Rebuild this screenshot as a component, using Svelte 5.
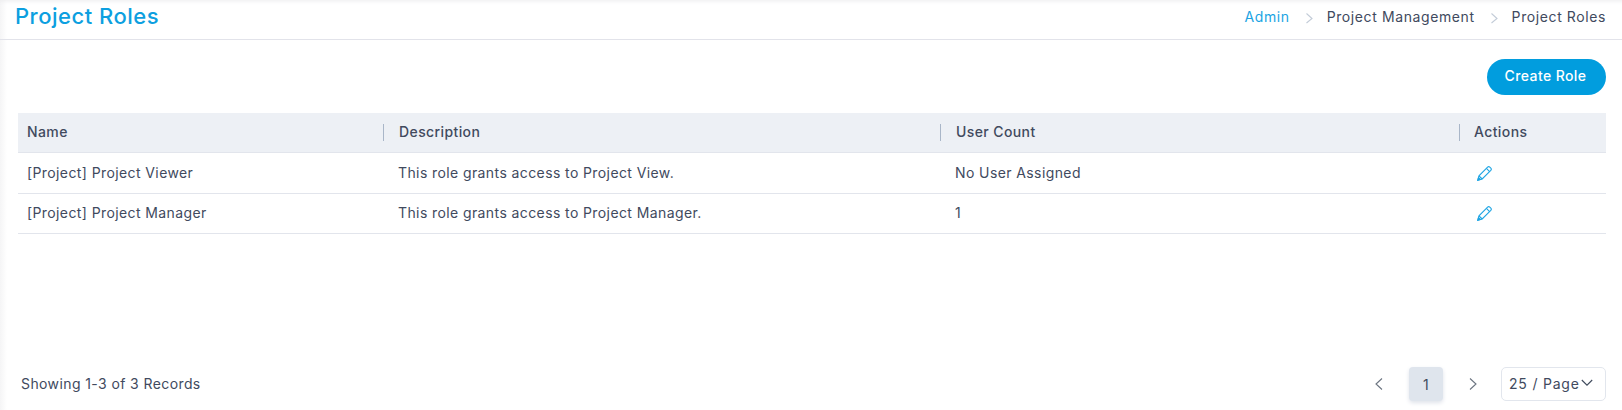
<script>
  const crumbs = ["Project Management", "Project Roles"];
  const roles = [
    { name: "[Project] Project Viewer", description: "This role grants access to Project View.", users: "No User Assigned" },
    { name: "[Project] Project Manager", description: "This role grants access to Project Manager.", users: "1" }
  ];
  const columns = ["Name", "Description", "User Count", "Actions"];
</script>

<div class="page">
  <header class="topbar">
    <h1>Project Roles</h1>
    <nav class="crumbs">
      <span class="link">Admin</span>
      {#each crumbs as crumb}
        <svg class="sep" width="9" height="12" viewBox="0 0 9 12"><path d="M1.5 1.5 7 6.5 1.5 11" fill="none" stroke="#c3ccd8" stroke-width="1.1" /></svg>
        <span>{crumb}</span>
      {/each}
    </nav>
  </header>

  <main class="content">
    <div class="toolbar">
      <button class="create">Create Role</button>
    </div>

    <div class="table">
      <div class="row head">
        {#each columns as col}
          <div class="cell">{col}</div>
        {/each}
      </div>
      {#each roles as role}
        <div class="row body">
          <div class="cell">{role.name}</div>
          <div class="cell">{role.description}</div>
          <div class="cell">{role.users}</div>
          <div class="cell">
            <svg class="edit" width="15" height="15" viewBox="0 0 15 15" fill="none" stroke="#1fa5e3" stroke-width="1.1">
              <path d="M.8 14.2 2 9.8 10.6 1.2a1.6 1.6 0 0 1 2.2 0l1 1a1.6 1.6 0 0 1 0 2.2L5.2 13Z" />
              <path d="M2 9.8 5.2 13M9.4 2.4l3.2 3.2" />
              <path d="M.8 14.2 1.5 11.6 3.4 13.5Z" fill="#1fa5e3" />
            </svg>
          </div>
        </div>
      {/each}
    </div>

    <footer class="footer">
      <span class="count">Showing 1-3 of 3 Records</span>
      <div class="pager">
        <svg class="arrow" width="10" height="14" viewBox="0 0 10 14"><path d="M8 1.5 2 7l6 5.5" fill="none" stroke="#6b7480" stroke-width="1.1" /></svg>
        <span class="current">1</span>
        <svg class="arrow" width="10" height="14" viewBox="0 0 10 14"><path d="M2 1.5 8 7l-6 5.5" fill="none" stroke="#6b7480" stroke-width="1.1" /></svg>
        <div class="size">
          <span>25 / Page</span>
          <svg width="12" height="8" viewBox="0 0 12 8"><path d="M.8 1l5.2 5.2L11.2 1" fill="none" stroke="#3f4a5c" stroke-width="1.1" /></svg>
        </div>
      </div>
    </footer>
  </main>
</div>

<style>
  :global(body) {
    margin: 0;
    background: #fff;
  }

  .page {
    height: 410px;
    display: flex;
    flex-direction: column;
    overflow: hidden;
    font-family: Inter, "Open Sans", sans-serif;
    font-size: 14px;
    letter-spacing: 0.4px;
    color: #414a5e;
    background: linear-gradient(90deg, #f5f5f6, #fff 7px);
    box-shadow: inset 0 5px 4px -4px #ececee;
  }

  .topbar {
    height: 40px;
    flex: none;
    box-sizing: border-box;
    display: flex;
    align-items: center;
    justify-content: space-between;
    padding: 0 16px 6px 15px;
    border-bottom: 1px solid #e2e3ea;
  }

  h1 {
    margin: -2px 0 0;
    font-size: 22px;
    font-weight: 500;
    letter-spacing: 0.5px;
    color: #0d9fe0;
  }

  .crumbs {
    display: flex;
    align-items: center;
    letter-spacing: 0.6px;
  }

  .link {
    color: #1ba4e3;
  }

  .sep {
    margin: 2px 13px 0 15px;
  }

  .content {
    flex: 1;
    display: flex;
    flex-direction: column;
    padding: 19px 16px 9px 18px;
  }

  .toolbar {
    display: flex;
    justify-content: flex-end;
    margin-bottom: 18px;
  }

  .create {
    width: 119px;
    height: 36px;
    padding: 0 2px 4px 0;
    border: none;
    border-radius: 18px;
    background: #019dde;
    color: #fff;
    font: 500 14px Inter, sans-serif;
    letter-spacing: 0.4px;
  }

  .row {
    display: grid;
    grid-template-columns: 365px 557px 519px 147px;
    box-sizing: border-box;
    height: 40.4px;
    align-items: center;
    border-bottom: 1px solid #e2e5ec;
  }

  .cell {
    padding-left: 15px;
  }

  .row .cell:first-child {
    padding-left: 9px;
  }

  .row .cell:last-child {
    padding-left: 14px;
  }

  .body .cell:not(:last-child) {
    padding-bottom: 2px;
  }

  .head {
    background: #edf0f5;
    font-weight: 500;
  }

  .head .cell {
    line-height: 15px;
    padding-bottom: 2px;
    border-left: 1px solid #a9b6c8;
  }

  .head .cell:first-child {
    border-left: none;
  }

  .edit {
    display: block;
    margin-left: 4px;
  }

  .footer {
    margin-top: auto;
    display: flex;
    align-items: center;
    justify-content: space-between;
    padding-left: 3px;
  }

  .count {
    margin-bottom: 2px;
  }

  .pager {
    display: flex;
    align-items: center;
  }

  .current {
    width: 34px;
    height: 34px;
    margin: 0 25px;
    display: flex;
    align-items: center;
    justify-content: center;
    border-radius: 4px;
    background: #dfe5ed;
    box-shadow: 0 2px 4px #dfe3ea;
  }

  .size {
    width: 105px;
    height: 34px;
    box-sizing: border-box;
    margin-left: 23px;
    display: flex;
    align-items: center;
    gap: 1px;
    padding: 0 0 2px 7px;
    white-space: nowrap;
    letter-spacing: 0.8px;
    border: 1px solid #e2e6ed;
    border-radius: 5px;
  }
</style>
